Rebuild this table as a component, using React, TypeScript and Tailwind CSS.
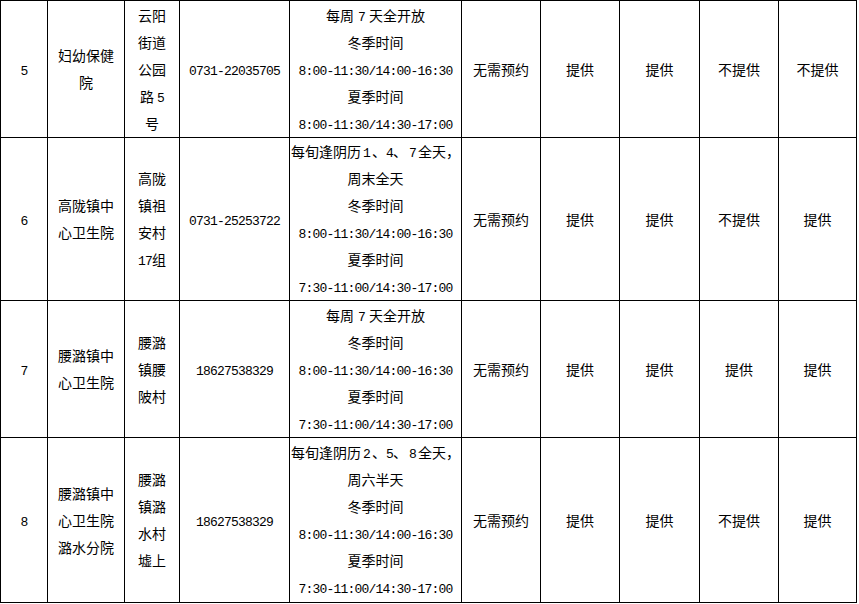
import React from "react";

const M = ({ children, cls = "" }: { children: React.ReactNode; cls?: string }) => (
  <span className={"font-[Liberation_Mono,monospace] text-[13px] tracking-[-0.8px] " + cls}>{children}</span>
);

const Cell = ({ children }: { children: React.ReactNode }) => (
  <div className="bg-white flex flex-col items-center justify-center text-center whitespace-nowrap">
    {children}
  </div>
);

const L = ({ children }: { children: React.ReactNode }) => <div className="h-[27px] leading-[27px]">{children}</div>;

type Row = {
  no: string;
  name: string[];
  addr: React.ReactNode[];
  phone: string;
  sched: React.ReactNode[];
  cols: string[];
};

const winter = <M>8:00-11:30/14:00-16:30</M>;

const rows: Row[] = [
  {
    no: "5",
    name: ["妇幼保健", "院"],
    addr: ["云阳", "街道", "公园", <>路 <M>5</M></>, "号"],
    phone: "0731-22035705",
    sched: [
      <>每周<M cls="mx-[4px]">7</M>天全开放</>,
      "冬季时间",
      winter,
      "夏季时间",
      <M>8:00-11:30/14:30-17:00</M>,
    ],
    cols: ["无需预约", "提供", "提供", "不提供", "不提供"],
  },
  {
    no: "6",
    name: ["高陇镇中", "心卫生院"],
    addr: ["高陇", "镇祖", "安村", <><M>17</M>组</>],
    phone: "0731-25253722",
    sched: [
      <>每旬逢阴历<M cls="mx-[2px]">1</M>、<M>4</M>、<M cls="mx-[2px]">7</M>全天，</>,
      "周末全天",
      "冬季时间",
      winter,
      "夏季时间",
      <M>7:30-11:00/14:30-17:00</M>,
    ],
    cols: ["无需预约", "提供", "提供", "不提供", "提供"],
  },
  {
    no: "7",
    name: ["腰潞镇中", "心卫生院"],
    addr: ["腰潞", "镇腰", "陂村"],
    phone: "18627538329",
    sched: [
      <>每周<M cls="mx-[4px]">7</M>天全开放</>,
      "冬季时间",
      winter,
      "夏季时间",
      <M>7:30-11:00/14:30-17:00</M>,
    ],
    cols: ["无需预约", "提供", "提供", "提供", "提供"],
  },
  {
    no: "8",
    name: ["腰潞镇中", "心卫生院", "潞水分院"],
    addr: ["腰潞", "镇潞", "水村", "墟上"],
    phone: "18627538329",
    sched: [
      <>每旬逢阴历<M cls="mx-[2px]">2</M>、<M>5</M>、<M cls="mx-[2px]">8</M>全天，</>,
      "周六半天",
      "冬季时间",
      winter,
      "夏季时间",
      <M>7:30-11:00/14:30-17:00</M>,
    ],
    cols: ["无需预约", "提供", "提供", "不提供", "提供"],
  },
];

export default function App() {
  return (
    <div className="bg-white min-h-[604px] w-[859px] text-black text-[14px] font-[Noto_Sans_CJK_SC,sans-serif]">
      <div className="w-[857px] grid grid-cols-[46px_76px_54px_109px_171px_78px_78px_79px_78px_77px] grid-rows-[136px_162px_136px_164px] gap-px bg-black p-px">
        {rows.map((r) => (
          <React.Fragment key={r.no}>
            <Cell>
              <L>
                <M>{r.no}</M>
              </L>
            </Cell>
            <Cell>
              {r.name.map((n, i) => (
                <L key={i}>{n}</L>
              ))}
            </Cell>
            <Cell>
              {r.addr.map((a, i) => (
                <L key={i}>{a}</L>
              ))}
            </Cell>
            <Cell>
              <L>
                <M>{r.phone}</M>
              </L>
            </Cell>
            <Cell>
              {r.sched.map((s, i) => (
                <L key={i}>{s}</L>
              ))}
            </Cell>
            {r.cols.map((c, i) => (
              <Cell key={i}>
                <L>{c}</L>
              </Cell>
            ))}
          </React.Fragment>
        ))}
      </div>
    </div>
  );
}
